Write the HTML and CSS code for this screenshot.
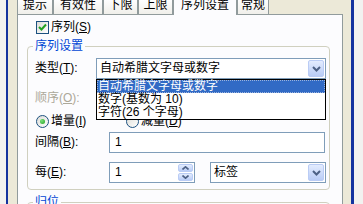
FILE: index.html
```html
<!DOCTYPE html>
<html>
<head>
<meta charset="utf-8">
<link rel="stylesheet" href="styles.css">
</head>
<body>
<div class="window">
  <div class="tabs">
    <div class="tab w1">提示</div>
    <div class="tab w2">有效性</div>
    <div class="tab w3">下限</div>
    <div class="tab w4">上限</div>
    <div class="tab sel">序列设置</div>
    <div class="tab w6">常规</div>
  </div>
  <div class="panel">
    <div class="check">
      <span class="cb"><svg width="11" height="11" viewBox="0 0 11 11"><path d="M2 5 L4.5 7.5 L9 2.5" fill="none" stroke="#21A121" stroke-width="2"/></svg></span>
      <span>序列(<u>S</u>)</span>
    </div>
    <fieldset class="group g1">
      <legend>序列设置</legend>
      <div class="row h21">
        <span class="lbl lw1">类型(<u>T</u>):</span>
        <div class="combo cw1">
          <span class="ctext">自动希腊文字母或数字</span>
          <span class="cbtn"><svg width="9" height="6" viewBox="0 0 9 6"><path d="M1 1 L4.5 4.5 L8 1" fill="none" stroke="#4D6185" stroke-width="2"/></svg></span>
          <ul class="droplist">
            <li class="hl"><span>自动希腊文字母或数字</span></li>
            <li>数字(基数为 10)</li>
            <li>字符(26 个字母)</li>
          </ul>
        </div>
      </div>
      <div class="row h21 r2">
        <span class="lbl dis">顺序(<u>O</u>):</span>
      </div>
      <div class="row r3">
        <span class="radio on"><span class="dot"></span></span>
        <span class="rlbl">增量(<u>I</u>)</span>
        <span class="radio r-off"></span>
        <span class="rlbl">减量(<u>D</u>)</span>
      </div>
      <div class="row h21 r4">
        <span class="lbl lw2">间隔(<u>B</u>):</span>
        <div class="edit ew1">1</div>
      </div>
      <div class="row h21 r5">
        <span class="lbl lw2">每(<u>E</u>):</span>
        <div class="edit spin">
          <span class="stext">1</span>
          <span class="sbtns">
            <span class="sb"><svg width="7" height="4" viewBox="0 0 7 4"><path d="M0.5 3.5 L3.5 0.8 L6.5 3.5" fill="none" stroke="#4D6185" stroke-width="1.6"/></svg></span>
            <span class="sb"><svg width="7" height="4" viewBox="0 0 7 4"><path d="M0.5 0.5 L3.5 3.2 L6.5 0.5" fill="none" stroke="#4D6185" stroke-width="1.6"/></svg></span>
          </span>
        </div>
        <div class="combo cw2">
          <span class="ctext">标签</span>
          <span class="cbtn"><svg width="9" height="6" viewBox="0 0 9 6"><path d="M1 1 L4.5 4.5 L8 1" fill="none" stroke="#4D6185" stroke-width="2"/></svg></span>
        </div>
      </div>
    </fieldset>
    <fieldset class="group g2">
      <legend>归位</legend>
    </fieldset>
  </div>
</div>
</body>
</html>
```
FILE: styles.css
```css
* { box-sizing: border-box; margin: 0; padding: 0; }
html, body { width: 363px; height: 204px; overflow: hidden; }
body {
  background: #F2F2F0;
  font: 12px/13px "Liberation Sans", "Noto Sans CJK SC", sans-serif;
  color: #000;
}
u { text-decoration: underline; text-underline-offset: 1px; }

.window {
  margin-left: 6px;
  width: 348px;
  height: 204px;
  border-left: 2px solid #14339F;
  border-right: 3px solid #14339F;
  background: #ECE9D8;
  padding-left: 9px;
}

.tabs { display: flex; height: 14px; }
.tab {
  height: 14px;
  border-left: 1px solid #919B9C;
  border-right: 1px solid #919B9C;
  background: linear-gradient(#FEFEFE, #F0EFEA);
  text-align: center;
  line-height: 11px;
  white-space: nowrap;
  overflow: hidden;
}
.w1 { width: 36px; }
.w2 { width: 50px; }
.w3 { width: 35px; }
.w4 { width: 35px; }
.w6 { width: 32px; }
.tab.sel {
  width: 64px;
  height: 15px;
  background: #FCFCFE;
  position: relative;
  z-index: 2;
}

.panel {
  width: 326px;
  height: 190px;
  border: 1px solid #919B9C;
  border-bottom: none;
  background: #FCFCFE;
  padding: 6px 0 0 9px;
  overflow: hidden;
}

.check { display: flex; align-items: center; height: 13px; margin-left: 9px; gap: 2px; }
.cb {
  width: 13px; height: 13px;
  border: 1px solid #1C5180;
  background: linear-gradient(135deg, #DCDCD7, #FFFFFF);
  display: flex; align-items: center; justify-content: center;
}

.group {
  width: 303px;
  margin-top: 6px;
  border: 1px solid #D0D0BF;
  border-radius: 4px;
  padding: 5px 3px 6px 7px;
}
.group legend {
  color: #0046D5;
  padding: 0 2px;
  margin-left: -2px;
  line-height: 13px;
  height: 13px;
}
.g2 { height: 30px; }

.row { display: flex; align-items: center; }
.h21 { height: 21px; }
.r2 { margin-top: 9px; }
.r3 { margin-top: 6px; height: 13px; }
.r4 { margin-top: 4px; }
.r5 { margin-top: 9px; }

.lbl { white-space: nowrap; }
.lw1 { width: 61px; }
.lw2 { width: 74px; }
.dis { color: #ACA899; }

.combo {
  position: relative;
  height: 21px;
  border: 1px solid #7F9DB9;
  background: #fff;
  display: flex;
  align-items: center;
  padding: 1px 1px 1px 3px;
}
.cw1 { width: 230px; }
.cw2 { width: 116px; margin-left: 15px; }
.ctext { flex: 1; white-space: nowrap; }
.cbtn {
  width: 16px; height: 17px;
  border: 1px solid #BACCF5;
  border-radius: 2px;
  background: linear-gradient(#E3ECFE, #B9CCF6);
  display: flex; align-items: center; justify-content: center;
}

.droplist {
  list-style: none;
  position: absolute;
  top: 20px;
  left: -1px;
  width: 230px;
  height: 41px;
  border: 1px solid #000;
  background: #fff;
  z-index: 5;
}
.droplist li { height: 13px; line-height: 13px; padding-left: 1px; white-space: nowrap; }
.droplist li.hl { background: #316AC5; color: #fff; outline: 1px dotted #9BB3DD; outline-offset: -1px; }

.radio {
  width: 13px; height: 13px;
  border: 1px solid #1C5180;
  border-radius: 50%;
  background: linear-gradient(135deg, #DCDCD7, #FFFFFF);
  display: flex; align-items: center; justify-content: center;
  margin-left: 1px;
}
.dot { width: 5px; height: 5px; border-radius: 50%; background: radial-gradient(circle at 35% 35%, #7BE07B, #21A121); }
.rlbl { margin-left: 2px; width: 74px; white-space: nowrap; }

.edit {
  height: 21px;
  border: 1px solid #7F9DB9;
  background: #fff;
  padding-left: 5px;
  display: flex;
  align-items: center;
}
.ew1 { width: 216px; }
.spin { width: 86px; padding: 1px 1px 1px 5px; }
.stext { flex: 1; }
.sbtns { display: flex; flex-direction: column; gap: 1px; width: 15px; height: 17px; }
.sb {
  flex: 1;
  border: 1px solid #BACCF5;
  border-radius: 2px;
  background: linear-gradient(#E3ECFE, #B9CCF6);
  display: flex; align-items: center; justify-content: center;
}
```
